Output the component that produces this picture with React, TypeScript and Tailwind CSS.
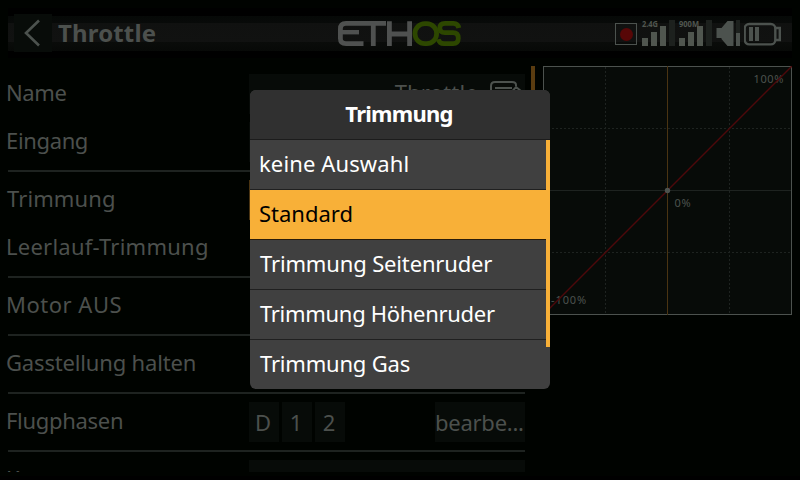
import React from "react";

type RowProps = { label: string; tracking?: string; children?: React.ReactNode };

function Row({ label, tracking = "", children }: RowProps) {
  return (
    <div className="flex h-10 shrink-0 items-start">
      <div className={`w-[243px] shrink-0 whitespace-nowrap leading-[36px] ${tracking}`}>{label}</div>
      <div className="flex h-10 w-[276px] shrink-0">{children}</div>
    </div>
  );
}

function Separator() {
  return <div className="ml-0.5 h-0.5 shrink-0 bg-[#1e2320]" />;
}

function Field({ children }: { children?: React.ReactNode }) {
  return <div className="flex h-10 w-full items-start justify-end bg-[#070b08]">{children}</div>;
}

function Logo() {
  return (
    <svg width="124" height="26" viewBox="0 0 124 26" fill="none" strokeWidth="4.8">
      <g stroke="#4f5150">
        <path d="M48 2.4H8Q2.4 2.4 2.4 8V17.5Q2.4 22.6 8 22.6H25.5" />
        <path d="M3 11.2H21" strokeWidth="4.4" />
        <path d="M35.3 2.4V25" />
        <path d="M51.4 0.2V25M71.6 0.2V25M51.4 13H71.6" />
      </g>
      <g stroke="#2d4700">
        <rect x="77" y="2.6" width="21.6" height="20" rx="9.8" />
        <path d="M120.8 7Q120 2.4 115.5 2.4H107Q101.8 2.4 101.8 7T107 11.7H115Q120.3 11.7 120.3 17.2T115 22.6H106Q101.3 22.6 100.3 18.2" />
      </g>
    </svg>
  );
}

function Signal({ band, width }: { band: string; width: number }) {
  return (
    <svg width="34" height="26" viewBox="0 0 34 26" fill="#50564f" className="overflow-visible">
      <rect x="27" y="-1" width="6" height="26" fill="#1d211e" />
      <rect y="17" width="6" height="8" />
      <rect x="9" y="11" width="6" height="14" />
      <rect x="18" y="5" width="6" height="20" />
      <text x="0" y="5.5" fontSize="9" fontWeight="700" textLength={width} lengthAdjust="spacingAndGlyphs">
        {band}
      </text>
    </svg>
  );
}

function Header() {
  return (
    <header className="flex h-[50px] bg-[linear-gradient(to_bottom,#000_0,#000_8px,#060907_8px,#080a09_15px,#101110_15px,#111211_34px,#0a0c0a_34px,#070907_43px,#000_43px)]">
      <div className="flex w-[330px] items-start pl-1.5 pt-1.5">
        <div className="flex size-[38px] items-center justify-center bg-[#080c09]">
          <svg width="38" height="38" fill="none" stroke="#4c524e" strokeWidth="2.6">
            <path d="M25 6.5L12 19L25 31.5" />
          </svg>
        </div>
        <span className="ml-1.5 text-[24px] font-bold leading-[37px] tracking-[0.15px]">Throttle</span>
      </div>
      <div className="w-[277px] pt-[13px]">
        <Logo />
      </div>
      <div className="flex pt-3">
        <svg width="27" height="26" fill="none">
          <rect x="0.5" y="3.5" width="21" height="21" stroke="#4c524e" />
          <circle cx="11.5" cy="14.5" r="6.5" fill="#570707" />
        </svg>
        <div className="w-[37px] pt-px"><Signal band="2.4G" width={16} /></div>
        <div className="w-[37px] pt-px"><Signal band="900M" width={20} /></div>
        <svg width="28" height="28" fill="#4c524e">
          <path d="M0.5 8H5.5L11.5 1H17.5V26H11.5L5.5 19V18H0.5Z" />
          <rect x="20" width="4" height="13" fill="#1d211e" />
          <rect x="20" y="13" width="4" height="13" />
        </svg>
        <svg width="38" height="28" fill="none" stroke="#4c524e" strokeWidth="2.4">
          <rect x="0.7" y="4" width="30.6" height="20.4" rx="4.5" />
          <path d="M31.8 8H35.8V20H31.8" />
          <path d="M5 7H9V21H5ZM11 7H15V21H11Z" fill="#4c524e" stroke="none" />
        </svg>
      </div>
    </header>
  );
}

function Curve() {
  return (
    <svg width="249" height="249" viewBox="0 0 249 249" fill="none" className="shrink-0">
      <rect x="0.5" y="0.5" width="248" height="248" fill="#070b08" stroke="#4c524e" />
      <g stroke="#1e2320">
        <path d="M1 124.5H248" />
        <path d="M1 62.5H248M1 186.5H248M62.5 1V248M186.5 1V248" strokeDasharray="2 2" />
      </g>
      <path d="M124.5 0V249" stroke="#4a3412" />
      <g fill="#4c524e" fontSize="11" letterSpacing="0.6">
        <text x="210.5" y="17">100%</text>
        <text x="131.5" y="141">0%</text>
        <text x="8" y="238" letterSpacing="0.9">-100%</text>
      </g>
      <path d="M0 249L249 0" stroke="#4d080a" strokeWidth="1.4" />
      <circle cx="124.5" cy="124.5" r="2.7" fill="#4c524e" />
    </svg>
  );
}

const options = [
  { name: "keine Auswahl", style: "border-[#202020] pl-[9px] tracking-[0.12px]" },
  { name: "Standard", style: "border-[#2a1c0a] bg-[#f8b038] pl-[9px] text-black" },
  { name: "Trimmung Seitenruder", style: "border-[#202020] pl-2.5 tracking-[-0.15px]" },
  { name: "Trimmung Höhenruder", style: "border-[#202020] pl-2.5 tracking-[-0.3px]" },
  { name: "Trimmung Gas", style: "border-transparent pl-2.5 tracking-[-0.2px]" },
];

function TrimMenu() {
  return (
    <div className="absolute left-[250px] top-[90px] h-[299px] w-[300px] overflow-hidden rounded-md bg-[#404040] text-white">
      <div className="h-[50px] border-b border-[#1c1c1c] bg-[#303030] pr-0.5 text-center text-[22px] font-bold leading-[46px] tracking-[-0.75px]">
        Trimmung
      </div>
      <div className="flex">
        <ul className="w-[296px]">
          {options.map((option) => (
            <li key={option.name} className={`h-[50px] border-b leading-[46px] ${option.style}`}>
              {option.name}
            </li>
          ))}
        </ul>
        <div className="h-[207px] w-1 bg-[#f8b038]" />
      </div>
    </div>
  );
}

export default function App() {
  return (
    <div className="relative h-[480px] w-[800px] overflow-hidden border-b-4 border-black bg-[#000300] px-2 pt-2 font-['Noto_Sans','Open_Sans',sans-serif] text-[22px] text-[#4c504d]">
      <Header />
      <main className="-ml-0.5 flex pt-2">
        <section className="flex h-[406px] w-[519px] shrink-0 flex-col gap-2 overflow-hidden pt-2">
          <Row label="Name" tracking="tracking-[-0.4px]">
            <Field>
              <span className="leading-[36px] tracking-[0.2px]">Throttle</span>
              <svg width="34" height="30" fill="none" stroke="#4c524e" strokeWidth="2" className="ml-[11px] mr-0.5 mt-[5px]">
                <path d="M27 7V6Q27 3 23 3H6Q2 3 2 7V23Q2 27 6 27H23Q27 27 27 23V18M6 9H23M6 14H19M6 19H15M27 8L32 12L22 22L17 23L18 18Z" />
              </svg>
            </Field>
          </Row>
          <Row label="Eingang" tracking="tracking-[-0.35px]"><Field /></Row>
          <Separator />
          <Row label="Trimmung" tracking="pl-px tracking-[0.1px]"><div className="w-full bg-[#4a3412]" /></Row>
          <Row label="Leerlauf-Trimmung" tracking="tracking-[0.24px]" />
          <Separator />
          <Row label="Motor AUS" tracking="tracking-[0.5px]" />
          <Separator />
          <Row label="Gasstellung halten" tracking="tracking-[-0.17px]" />
          <Separator />
          <Row label="Flugphasen" tracking="tracking-[-0.3px]">
            <div className="flex w-full gap-[3px] text-center leading-[40px]">
              <div className="w-[30px] bg-[#070b08] pr-0.5">D</div>
              <div className="w-[30px] bg-[#070b08] pr-0.5">1</div>
              <div className="w-[30px] bg-[#070b08] pr-0.5">2</div>
              <div className="ml-auto w-[90px] bg-[#070b08] pr-0.5 tracking-[-0.25px]">bearbe...</div>
            </div>
          </Row>
          <Separator />
          <Row label="Kurve"><Field /></Row>
        </section>
        <div className="ml-1.5 h-[200px] w-1 shrink-0 bg-[#5a3c10]" />
        <div className="ml-2">
          <Curve />
        </div>
      </main>
      <TrimMenu />
    </div>
  );
}
